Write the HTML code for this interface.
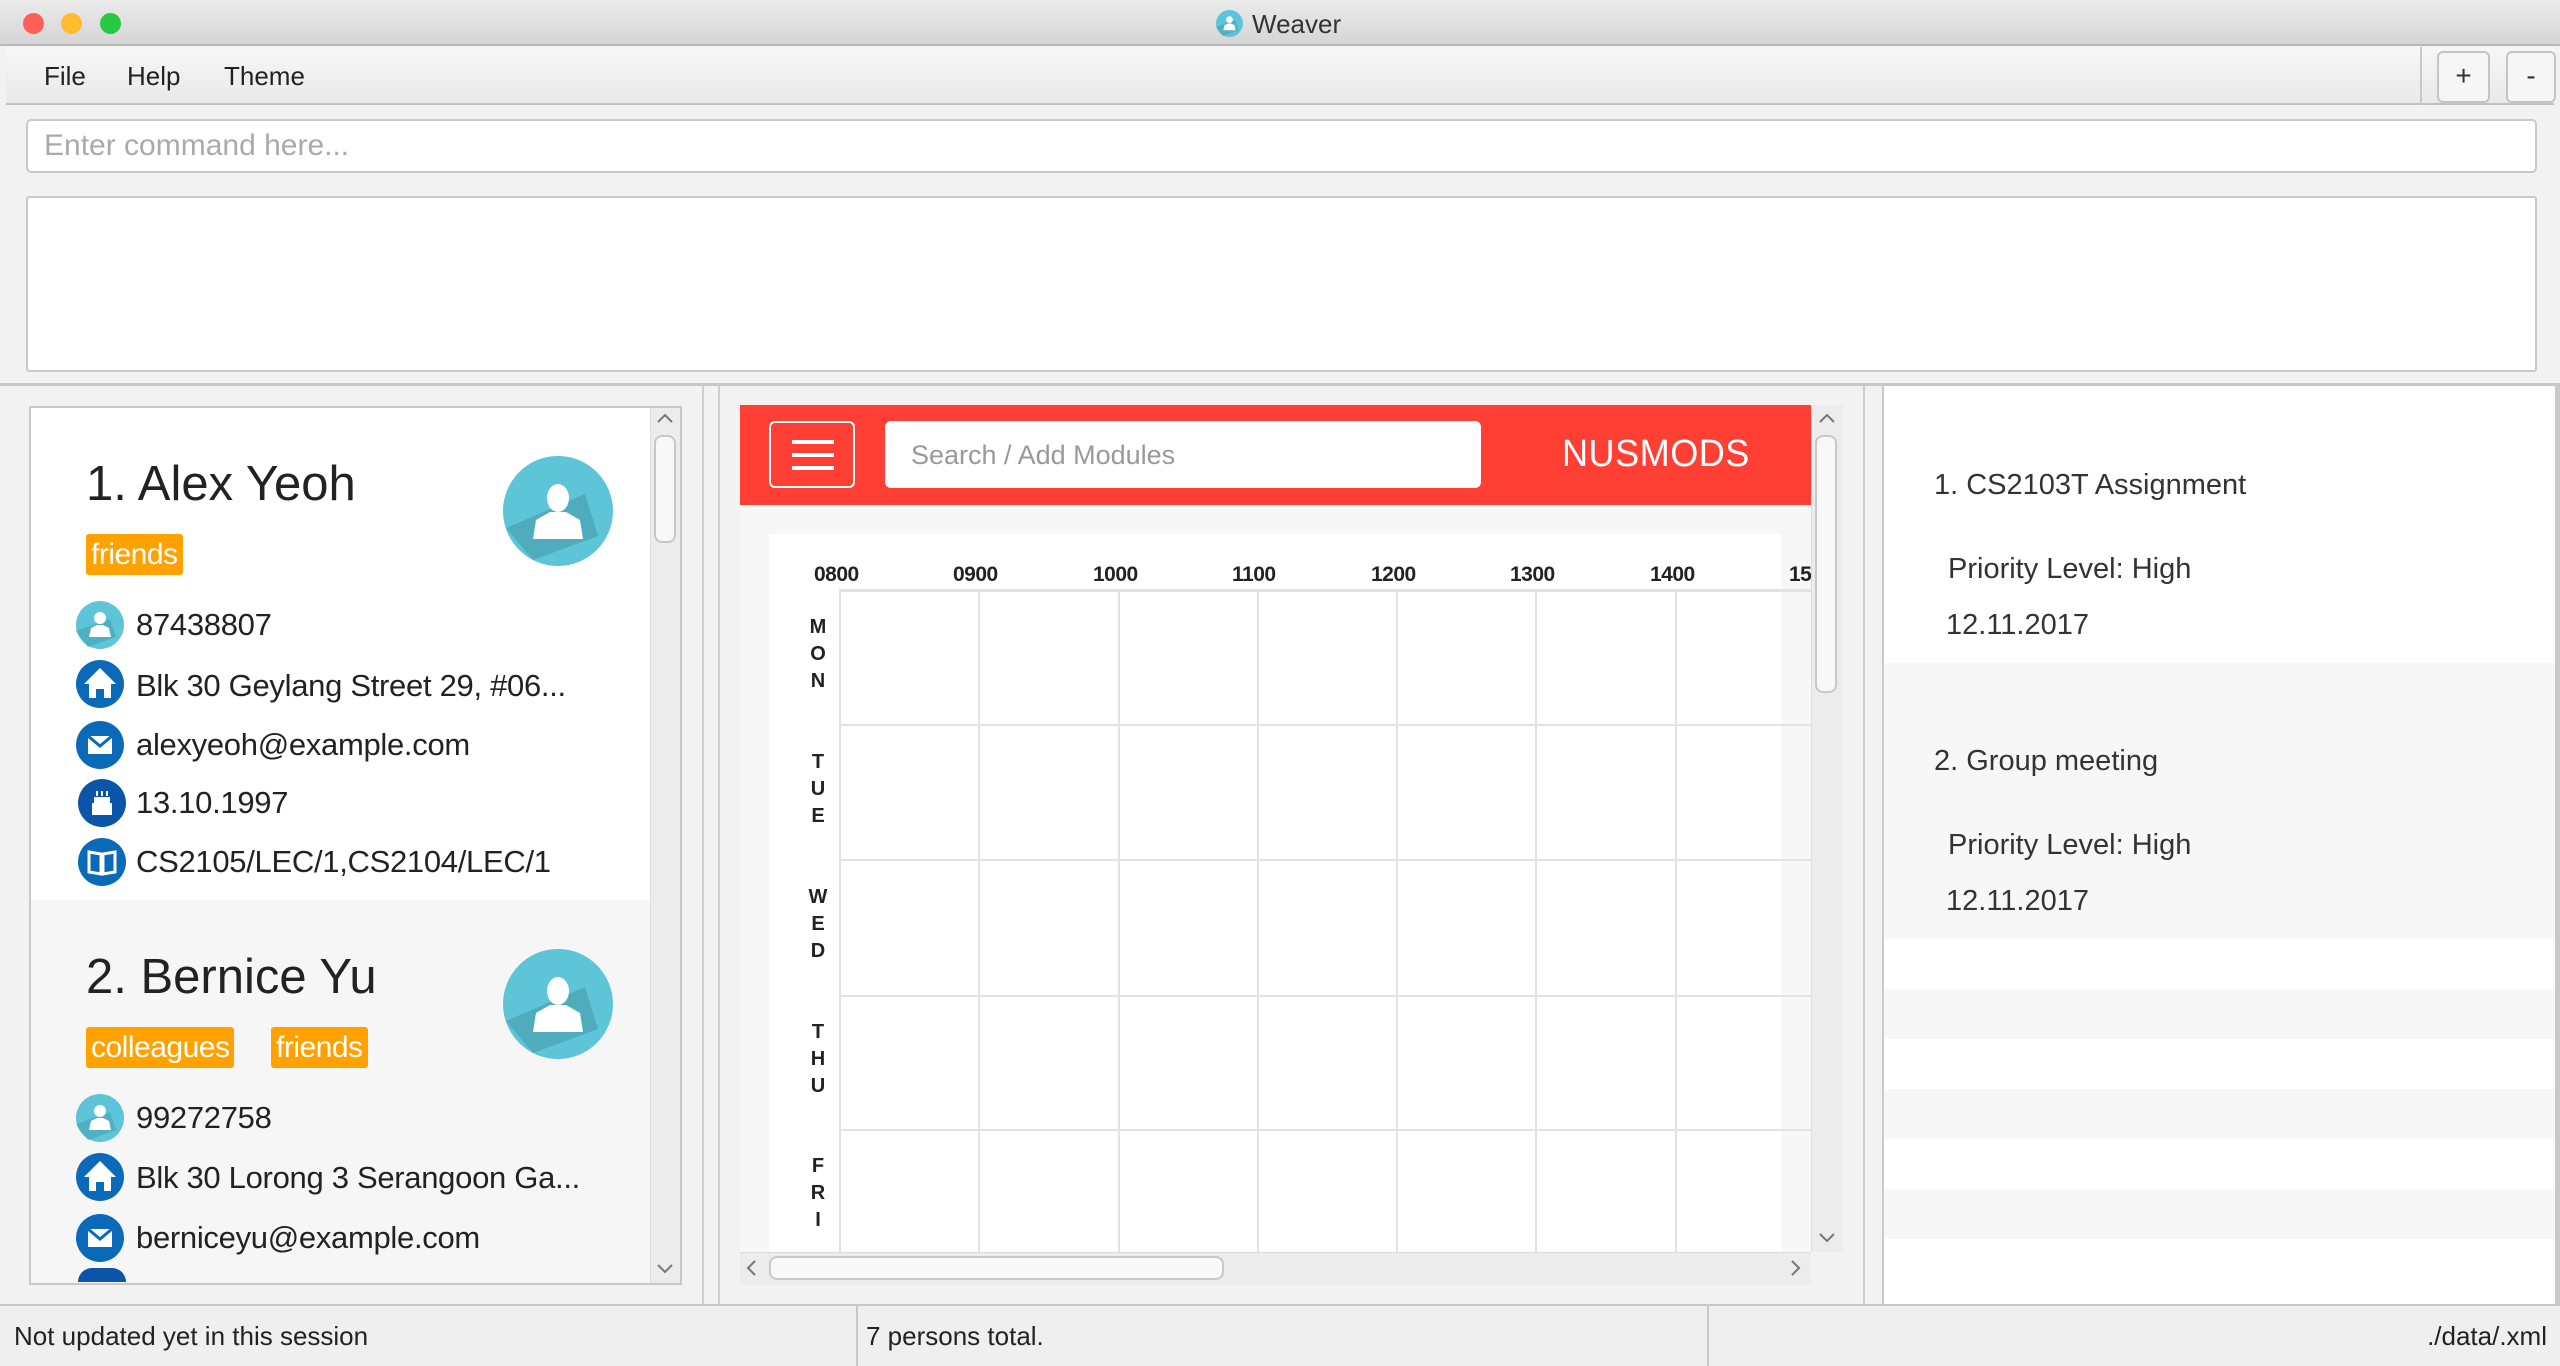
<!DOCTYPE html>
<html><head><meta charset="utf-8"><style>
*{box-sizing:border-box;margin:0;padding:0}
body{width:2560px;height:1366px;position:relative;overflow:hidden;background:#f2f2f2;font-family:"Liberation Sans",sans-serif;color:#333}
.a{position:absolute}
.t{position:absolute;white-space:nowrap}
.ic{position:absolute;width:48px;height:48px}
.row .t{font-size:31px;color:#222;letter-spacing:-0.3px}
.tag{position:absolute;background:#ffa200;color:#fff;font-size:30px;height:41px;line-height:41px;padding:0 5px;border-radius:3px;letter-spacing:-0.5px}
.hr{position:absolute;font-size:21px;font-weight:bold;color:#222;top:563px;letter-spacing:-0.5px}
.vl{position:absolute;top:591px;width:2px;height:661px;background:#e2e2e2}
.hl{position:absolute;left:839px;width:972px;height:2px;background:#e2e2e2}
.day{position:absolute;left:808px;width:20px;text-align:center;font-size:20px;font-weight:bold;color:#222;line-height:27px}
</style></head><body>
<svg width="0" height="0" style="position:absolute"><defs>
<symbol id="ph" viewBox="0 0 48 48"><circle cx="24" cy="24" r="24" fill="#5ec4d8"/><path d="M0 30 L34 18 L40 36 L12 46 Z" fill="#4aa6b6" opacity=".7"/><circle cx="24" cy="17" r="6" fill="#fff"/><path d="M13 36 L15 27 L21 24 L27 24 L33 27 L35 36 Z" fill="#fff"/></symbol>
<symbol id="ho" viewBox="0 0 48 48"><circle cx="24" cy="24" r="24" fill="#0a6ab8"/><path d="M24 8 L40 24 L35 24 L35 38 L28 38 L28 29 L20 29 L20 38 L13 38 L13 24 L8 24 Z" fill="#fff"/></symbol>
<symbol id="em" viewBox="0 0 48 48"><circle cx="24" cy="24" r="24" fill="#0a6ab8"/><rect x="12" y="15" width="24" height="18" fill="#fff"/><path d="M12 15 L24 25 L36 15" fill="none" stroke="#0a6ab8" stroke-width="3"/></symbol>
<symbol id="bd" viewBox="0 0 48 48"><circle cx="24" cy="24" r="24" fill="#0a55a8"/><rect x="14" y="24" width="20" height="12" fill="#fff"/><rect x="16" y="18" width="16" height="6" fill="#fff"/><path d="M19 12v5M24 12v5M29 12v5" stroke="#fff" stroke-width="2"/></symbol>
<symbol id="bk" viewBox="0 0 48 48"><circle cx="24" cy="24" r="24" fill="#0a6ab8"/><path d="M11 14 L23 16 L23 36 L11 34 Z M25 16 L37 14 L37 34 L25 36 Z" fill="none" stroke="#fff" stroke-width="3"/></symbol>
<symbol id="av" viewBox="0 0 110 110"><circle cx="55" cy="55" r="55" fill="#5ec4d8"/><path d="M3 72 L82 38 L95 80 L30 104 Z" fill="#4aa6b6" opacity=".8"/><ellipse cx="55" cy="42" rx="11" ry="14" fill="#fff"/><path d="M30 83 L33 64 L47 56 L63 56 L77 64 L80 83 Z" fill="#fff"/></symbol>
</defs></svg>
<!-- title bar -->
<div class="a" style="left:0;top:0;width:2560px;height:46px;background:linear-gradient(#ebebeb,#d5d5d5);border-bottom:2px solid #b9b9b9"></div>
<div class="a" style="left:23px;top:13px;width:21px;height:21px;border-radius:50%;background:#fe5f57"></div>
<div class="a" style="left:61px;top:13px;width:21px;height:21px;border-radius:50%;background:#febc2e"></div>
<div class="a" style="left:100px;top:13px;width:21px;height:21px;border-radius:50%;background:#28c840"></div>
<svg class="a" style="left:1216px;top:10px" width="27" height="27" viewBox="0 0 48 48"><use href="#ph"/></svg>
<div class="t" style="left:1252px;top:9px;font-size:26px;color:#333">Weaver</div>
<!-- menu -->
<div class="a" style="left:6px;top:47px;width:2548px;height:58px;background:linear-gradient(#f7f7f7,#e9e9e9);border-bottom:2px solid #c2c2c2"></div>
<div class="t" style="left:44px;top:61px;font-size:26px;color:#222">File</div>
<div class="t" style="left:127px;top:61px;font-size:26px;color:#222">Help</div>
<div class="t" style="left:224px;top:61px;font-size:26px;color:#222">Theme</div>
<div class="a" style="left:2420px;top:47px;width:2px;height:58px;background:#c8c8c8"></div>
<div class="a" style="left:2437px;top:51px;width:53px;height:52px;border:2px solid #c4c4c4;border-radius:6px;background:#f6f6f6;text-align:center;line-height:46px;font-size:28px">+</div>
<div class="a" style="left:2506px;top:51px;width:50px;height:52px;border:2px solid #c4c4c4;border-radius:6px;background:#f6f6f6;text-align:center;line-height:46px;font-size:28px">-</div>
<!-- command -->
<div class="a" style="left:26px;top:119px;width:2511px;height:54px;background:#fff;border:2px solid #c9c9c9;border-radius:5px"></div>
<div class="t" style="left:44px;top:129px;font-size:30px;color:#aaa">Enter command here...</div>
<div class="a" style="left:26px;top:196px;width:2511px;height:176px;background:#fff;border:2px solid #c9c9c9;border-radius:3px"></div>
<div class="a" style="left:0;top:383px;width:2560px;height:3px;background:#c8c8c8"></div>
<!-- left panel -->
<div class="a" style="left:29px;top:406px;width:653px;height:879px;background:#f6f6f6;border:2px solid #c9c9c9"></div>
<div class="a" style="left:31px;top:408px;width:619px;height:492px;background:#fff"></div>
<div class="a" style="left:650px;top:408px;width:30px;height:875px;background:#ececec;border-left:1px solid #ddd"></div>
<div class="a" style="left:654px;top:435px;width:22px;height:108px;background:#f8f8f8;border:2px solid #c8c8c8;border-radius:8px"></div>
<svg class="a" style="left:656px;top:412px" width="18" height="12"><path d="M2 10 L9 3 L16 10" fill="none" stroke="#777" stroke-width="2"/></svg>
<svg class="a" style="left:656px;top:1263px" width="18" height="12"><path d="M2 2 L9 9 L16 2" fill="none" stroke="#777" stroke-width="2"/></svg>
<div class="a" style="left:702px;top:386px;width:2px;height:920px;background:#d0d0d0"></div>
<div class="a" style="left:718px;top:386px;width:2px;height:920px;background:#d0d0d0"></div>

<div class="t" style="left:86px;top:456px;font-size:49px;color:#222">1. Alex Yeoh</div>
<svg class="a" style="left:503px;top:456px" width="110" height="110"><use href="#av"/></svg>
<div class="tag" style="left:86px;top:534px">friends</div>
<div class="row">
<svg class="ic" style="left:76px;top:601px"><use href="#ph"/></svg><div class="t" style="left:136px;top:607px">87438807</div>
<svg class="ic" style="left:76px;top:660px"><use href="#ho"/></svg><div class="t" style="left:136px;top:668px">Blk 30 Geylang Street 29, #06...</div>
<svg class="ic" style="left:76px;top:721px"><use href="#em"/></svg><div class="t" style="left:136px;top:727px">alexyeoh@example.com</div>
<svg class="ic" style="left:78px;top:779px"><use href="#bd"/></svg><div class="t" style="left:136px;top:785px">13.10.1997</div>
<svg class="ic" style="left:78px;top:838px"><use href="#bk"/></svg><div class="t" style="left:136px;top:844px">CS2105/LEC/1,CS2104/LEC/1</div>
</div>
<div class="t" style="left:86px;top:949px;font-size:49px;color:#222">2. Bernice Yu</div>
<svg class="a" style="left:503px;top:949px" width="110" height="110"><use href="#av"/></svg>
<div class="tag" style="left:86px;top:1027px">colleagues</div>
<div class="tag" style="left:271px;top:1027px">friends</div>
<div class="row">
<svg class="ic" style="left:76px;top:1094px"><use href="#ph"/></svg><div class="t" style="left:136px;top:1100px">99272758</div>
<svg class="ic" style="left:76px;top:1153px"><use href="#ho"/></svg><div class="t" style="left:136px;top:1160px">Blk 30 Lorong 3 Serangoon Ga...</div>
<svg class="ic" style="left:76px;top:1214px"><use href="#em"/></svg><div class="t" style="left:136px;top:1220px">berniceyu@example.com</div>
<div class="a" style="left:78px;top:1268px;width:48px;height:14px;border-radius:24px 24px 0 0;background:#0a55a8"></div>
</div>
<!-- middle -->
<div class="a" style="left:740px;top:505px;width:1071px;height:747px;background:#f7f7f7"></div>
<div class="a" style="left:740px;top:405px;width:1071px;height:100px;background:#ff3f33"></div>
<div class="a" style="left:769px;top:421px;width:86px;height:67px;border:2px solid #fff;border-radius:6px"></div>
<div class="a" style="left:792px;top:440px;width:42px;height:4px;background:#fff"></div>
<div class="a" style="left:792px;top:453px;width:42px;height:4px;background:#fff"></div>
<div class="a" style="left:792px;top:466px;width:42px;height:4px;background:#fff"></div>
<div class="a" style="left:885px;top:421px;width:596px;height:67px;background:#fff;border-radius:6px"></div>
<div class="t" style="left:911px;top:440px;font-size:27px;color:#999">Search / Add Modules</div>
<div class="t" style="left:1562px;top:433px;font-size:38px;color:#fff;letter-spacing:0.5px;transform:scaleX(0.95);transform-origin:left">NUSMODS</div>
<div class="a" style="left:769px;top:534px;width:1012px;height:718px;background:#fff"></div>
<div class="hr" style="left:814px">0800</div><div class="hr" style="left:953px">0900</div><div class="hr" style="left:1093px">1000</div><div class="hr" style="left:1232px">1100</div><div class="hr" style="left:1371px">1200</div><div class="hr" style="left:1510px">1300</div><div class="hr" style="left:1650px">1400</div><div class="hr" style="left:1789px">15</div>
<div class="hl" style="top:589px;height:3px"></div>
<div class="vl" style="left:839px"></div><div class="vl" style="left:978px"></div><div class="vl" style="left:1118px"></div><div class="vl" style="left:1257px"></div><div class="vl" style="left:1396px"></div><div class="vl" style="left:1535px"></div><div class="vl" style="left:1675px"></div>
<div class="hl" style="top:724px"></div><div class="hl" style="top:859px"></div><div class="hl" style="top:995px"></div><div class="hl" style="top:1129px"></div>
<div class="day" style="top:614px">M<br>O<br>N</div>
<div class="day" style="top:749px">T<br>U<br>E</div>
<div class="day" style="top:884px">W<br>E<br>D</div>
<div class="day" style="top:1019px">T<br>H<br>U</div>
<div class="day" style="top:1153px">F<br>R<br>I</div>
<div class="a" style="left:1811px;top:405px;width:32px;height:847px;background:#ececec;border-left:1px solid #ddd"></div>
<div class="a" style="left:1815px;top:435px;width:22px;height:258px;background:#f8f8f8;border:2px solid #c8c8c8;border-radius:8px"></div>
<svg class="a" style="left:1818px;top:412px" width="18" height="12"><path d="M2 10 L9 3 L16 10" fill="none" stroke="#777" stroke-width="2"/></svg>
<svg class="a" style="left:1818px;top:1232px" width="18" height="12"><path d="M2 2 L9 9 L16 2" fill="none" stroke="#777" stroke-width="2"/></svg>
<div class="a" style="left:740px;top:1252px;width:1071px;height:33px;background:#ececec;border-top:1px solid #ddd"></div>
<div class="a" style="left:769px;top:1256px;width:455px;height:24px;background:#f8f8f8;border:2px solid #c8c8c8;border-radius:8px"></div>
<svg class="a" style="left:745px;top:1259px" width="12" height="18"><path d="M10 2 L3 9 L10 16" fill="none" stroke="#777" stroke-width="2"/></svg>
<svg class="a" style="left:1790px;top:1259px" width="12" height="18"><path d="M2 2 L9 9 L2 16" fill="none" stroke="#777" stroke-width="2"/></svg>
<div class="a" style="left:1863px;top:386px;width:2px;height:920px;background:#d0d0d0"></div>
<!-- right panel -->
<div class="a" style="left:1882px;top:386px;width:2674px;height:918px;background:#fff;border-left:2px solid #c9c9c9"></div>
<div class="a" style="left:1884px;top:663px;width:2671px;height:276px;background:#f7f7f7"></div>
<div class="a" style="left:1884px;top:989px;width:2671px;height:50px;background:#f7f7f7"></div>
<div class="a" style="left:1884px;top:1089px;width:2671px;height:50px;background:#f7f7f7"></div>
<div class="a" style="left:1884px;top:1189px;width:2671px;height:50px;background:#f7f7f7"></div>
<div class="a" style="left:2555px;top:386px;width:5px;height:920px;background:#c9c9c9"></div>
<div class="t" style="left:1934px;top:469px;font-size:29px;color:#333">1. CS2103T Assignment</div>
<div class="t" style="left:1948px;top:553px;font-size:29px;color:#333">Priority Level: High</div>
<div class="t" style="left:1946px;top:609px;font-size:29px;color:#333">12.11.2017</div>
<div class="t" style="left:1934px;top:745px;font-size:29px;color:#333">2. Group meeting</div>
<div class="t" style="left:1948px;top:829px;font-size:29px;color:#333">Priority Level: High</div>
<div class="t" style="left:1946px;top:885px;font-size:29px;color:#333">12.11.2017</div>
<!-- status -->
<div class="a" style="left:0;top:1304px;width:2560px;height:62px;background:#efefef;border-top:2px solid #c8c8c8"></div>
<div class="a" style="left:856px;top:1306px;width:2px;height:60px;background:#c8c8c8"></div>
<div class="a" style="left:1707px;top:1306px;width:2px;height:60px;background:#c8c8c8"></div>
<div class="t" style="left:14px;top:1321px;font-size:26px;color:#222">Not updated yet in this session</div>
<div class="t" style="left:866px;top:1321px;font-size:26px;color:#222">7 persons total.</div>
<div class="t" style="right:13px;top:1321px;font-size:26px;color:#222">./data/.xml</div>
</body></html>
